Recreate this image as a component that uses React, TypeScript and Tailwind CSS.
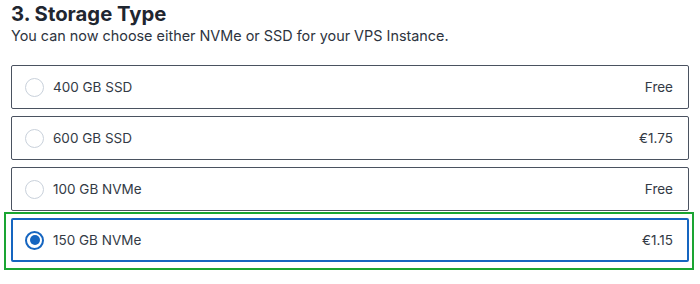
import { useState } from "react";

interface StorageOption {
  id: string;
  label: string;
  price: string;
}

const options: StorageOption[] = [
  { id: "ssd-400", label: "400 GB SSD", price: "Free" },
  { id: "ssd-600", label: "600 GB SSD", price: "€1.75" },
  { id: "nvme-100", label: "100 GB NVMe", price: "Free" },
  { id: "nvme-150", label: "150 GB NVMe", price: "€1.15" },
];

function Radio({ checked }: { checked: boolean }) {
  if (checked) {
    return (
      <span className="flex h-[19px] w-[19px] shrink-0 items-center justify-center rounded-full border-[2.5px] border-[#1565c0]">
        <span className="h-[10px] w-[10px] rounded-full bg-[#1565c0]" />
      </span>
    );
  }
  return <span className="h-[19px] w-[19px] shrink-0 rounded-full border-[1.5px] border-[#c9d1db]" />;
}

export default function App() {
  const [selected, setSelected] = useState("nvme-150");

  return (
    <div
      className="h-[284px] w-[700px] bg-white px-[11px] pt-[1px] text-[#2d3440]"
      style={{ fontFamily: "Inter, 'Noto Sans', sans-serif" }}
    >
      <h2 className="text-[20.3px] font-bold leading-[25px] text-[#1f2630]">3. Storage Type</h2>
      <p className="text-[14.4px] leading-[20px] text-[#2d3440]">
        You can now choose either NVMe or SSD for your VPS Instance.
      </p>
      <div className="mt-[19px] flex flex-col gap-[7px]">
        {options.map((o) => {
          const isSel = selected === o.id;
          return (
            <div key={o.id} className="relative">
              {isSel && (
                <div className="pointer-events-none absolute -bottom-[8px] -left-[7px] -right-[5px] -top-[6px] border-2 border-[#1aa532]" />
              )}
              <button
                type="button"
                onClick={() => setSelected(o.id)}
                className={
                  isSel
                    ? "flex h-[44px] w-full items-center rounded-[2px] border-2 border-[#1565c0] pl-[12px] pr-[14px] text-left"
                    : "flex h-[44px] w-full items-center rounded-[2px] border border-[#4a5260] pl-[13px] pr-[15px] text-left"
                }
              >
                <Radio checked={isSel} />
                <span className="ml-[9px] flex-1 text-[13.5px] text-[#333a45]">{o.label}</span>
                <span className="text-[13.5px] text-[#333a45]">{o.price}</span>
              </button>
            </div>
          );
        })}
      </div>
    </div>
  );
}
